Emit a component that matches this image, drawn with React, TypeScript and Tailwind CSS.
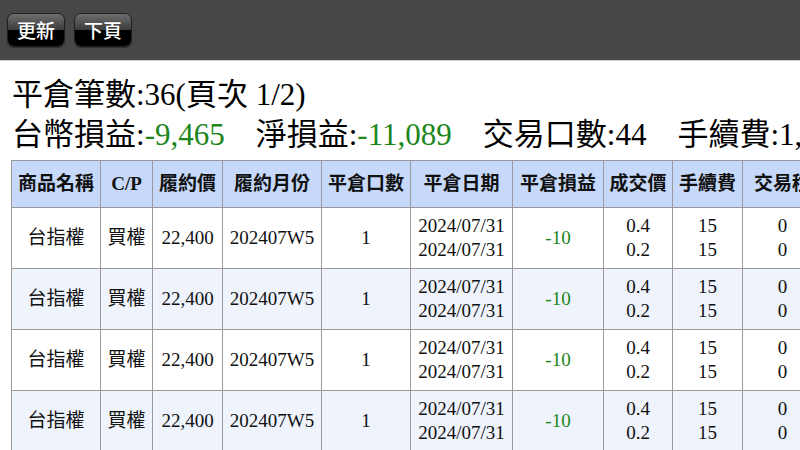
import React from "react";

const F = { fontFamily: '"Liberation Serif", "Noto Sans CJK TC", serif' };

const cols = [89, 52, 70, 99, 89, 102, 91, 69, 70, 80];
const headers = ["商品名稱", "C/P", "履約價", "履約月份", "平倉口數", "平倉日期", "平倉損益", "成交價", "手續費", "交易稅"];

function Btn({ label }: { label: string }) {
  return (
    <div className="relative w-[58px] h-[34px] rounded-[7px] border border-[#222] overflow-hidden flex items-center justify-center shadow-[0_1px_1px_rgba(0,0,0,0.4)]">
      <div className="absolute inset-x-0 top-0 h-1/2 bg-gradient-to-b from-[#6e6e6e] to-[#3c3c3c]" />
      <div className="absolute inset-x-0 bottom-0 h-1/2 bg-black" />
      <span className="relative text-white text-[19px] font-medium" style={{ fontFamily: '"Noto Sans CJK TC", sans-serif' }}>{label}</span>
    </div>
  );
}

export default function App() {
  const rows = [0, 1, 2, 3];
  return (
    <div className="w-[800px] h-[450px] overflow-hidden bg-white" style={F}>
      <div className="h-[61px] bg-[#474747] border-b border-[#cfcfcf] flex items-center gap-[9px] px-[7px]">
        <Btn label="更新" />
        <Btn label="下頁" />
      </div>
      <div className="pl-[12px] pt-[14px] text-[31px] leading-[40px] text-black whitespace-nowrap">
        平倉筆數:36(頁次 1/2)
      </div>
      <div className="pl-[12px] text-[31px] leading-[40px] text-black whitespace-nowrap flex gap-[31px]">
        <span>台幣損益:<span className="text-[#1c861c]">-9,465</span></span>
        <span>淨損益:<span className="text-[#1c861c]">-11,089</span></span>
        <span>交易口數:44</span>
        <span>手續費:1,320</span>
      </div>
      <div className="pl-[11px] pt-[5px]">
        <table className="border-collapse table-fixed text-[19px] text-[#111]" style={{ width: cols.reduce((a, b) => a + b, 0) }}>
          <colgroup>
            {cols.map((w, i) => (
              <col key={i} style={{ width: w }} />
            ))}
          </colgroup>
          <thead>
            <tr className="h-[47px] bg-[#c6d9fa]">
              {headers.map((h) => (
                <th key={h} className="border border-[#9a9a9a] font-bold text-center whitespace-nowrap px-0">
                  {h}
                </th>
              ))}
            </tr>
          </thead>
          <tbody>
            {rows.map((r) => (
              <tr key={r} className={`h-[61px] ${r % 2 === 1 ? "bg-[#eef3fc]" : "bg-white"}`}>
                <td className="border border-[#9a9a9a] text-center">台指權</td>
                <td className="border border-[#9a9a9a] text-center">買權</td>
                <td className="border border-[#9a9a9a] text-center">22,400</td>
                <td className="border border-[#9a9a9a] text-center">202407W5</td>
                <td className="border border-[#9a9a9a] text-center">1</td>
                <td className="border border-[#9a9a9a] text-center leading-[24px]">
                  2024/07/31<br />2024/07/31
                </td>
                <td className="border border-[#9a9a9a] text-center text-[#1c861c]">-10</td>
                <td className="border border-[#9a9a9a] text-center leading-[24px]">0.4<br />0.2</td>
                <td className="border border-[#9a9a9a] text-center leading-[24px]">15<br />15</td>
                <td className="border border-[#9a9a9a] text-center leading-[24px]">0<br />0</td>
              </tr>
            ))}
          </tbody>
        </table>
      </div>
    </div>
  );
}
